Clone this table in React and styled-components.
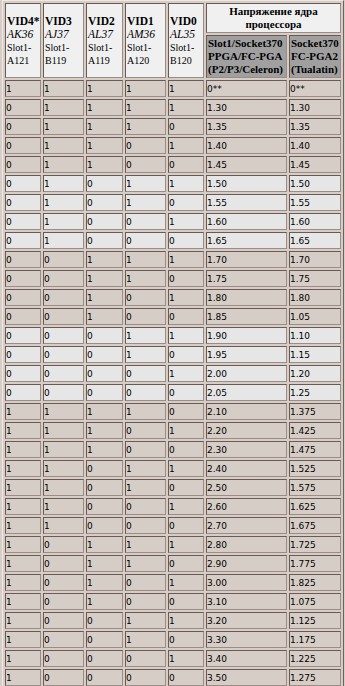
import React from 'react';
import styled, { createGlobalStyle } from 'styled-components';

const GlobalStyle = createGlobalStyle`
  html, body {
    margin: 0;
    padding: 0;
    background: #d6cec6;
  }
`;

const Table = styled.div`
  display: grid;
  grid-template-columns: 36px 41px 37px 41px 36px 81px 52px;
  grid-template-rows: 30px 43px;
  grid-auto-rows: 17px;
  gap: 2px;
  width: max-content;
  margin-left: 2px;
  padding: 2px;
  border: 1px solid;
  border-color: #efe9e5 #6f605c #6f605c #efe9e5;
  background: #d6cec6;
`;

const Box = styled.div`
  box-sizing: border-box;
  border: 1px solid;
  border-color: #6a5a56 #9c8c86 #9c8c86 #6a5a56;
  color: #000;
  white-space: nowrap;
  overflow: hidden;
`;

const VidHead = styled(Box)`
  grid-row: span 2;
  background: #f0f0f0;
  display: flex;
  flex-direction: column;
  justify-content: center;
  padding: 0 1px;
  font-family: "Liberation Serif", serif;
  font-size: 11px;
  line-height: 13px;
`;

const Pin = styled.b`
  font-size: 11.5px;
`;

const Socket = styled.i`
  font-size: 11.5px;
`;

const Slot = styled.span`
  font-size: 10px;
`;

const VoltHead = styled(Box)`
  grid-column: span 2;
  background: #f0f0f0;
  display: flex;
  align-items: center;
  justify-content: center;
  text-align: center;
  font: bold 11px/13px "Liberation Serif", serif;
`;

const SubHead = styled(Box)`
  background: #a0a0a0;
  display: flex;
  flex-direction: column;
  justify-content: center;
  padding: 0 1px;
  font: bold 11px/13.3px "Liberation Serif", serif;
`;

const Cell = styled(Box)`
  background: ${p => (p.$light ? '#e6e6e6' : '#d6cec6')};
  display: flex;
  align-items: center;
  padding: 0;
  font-family: "DejaVu Sans", sans-serif;
  font-size: 9px;
`;

const pins = [
  ['VID4*', 'AK36', 'Slot1-', 'A121'],
  ['VID3', 'AJ37', 'Slot1-', 'B119'],
  ['VID2', 'AL37', 'Slot1-', 'A119'],
  ['VID1', 'AM36', 'Slot1-', 'A120'],
  ['VID0', 'AL35', 'Slot1-', 'B120'],
];

const rows = [
  ['11111', '0**', '0**'],
  ['01111', '1.30', '1.30'],
  ['01110', '1.35', '1.35'],
  ['01101', '1.40', '1.40'],
  ['01100', '1.45', '1.45'],
  ['01011', '1.50', '1.50'],
  ['01010', '1.55', '1.55'],
  ['01001', '1.60', '1.60'],
  ['01000', '1.65', '1.65'],
  ['00111', '1.70', '1.70'],
  ['00110', '1.75', '1.75'],
  ['00101', '1.80', '1.80'],
  ['00100', '1.85', '1.05'],
  ['00011', '1.90', '1.10'],
  ['00010', '1.95', '1.15'],
  ['00001', '2.00', '1.20'],
  ['00000', '2.05', '1.25'],
  ['11110', '2.10', '1.375'],
  ['11101', '2.20', '1.425'],
  ['11100', '2.30', '1.475'],
  ['11011', '2.40', '1.525'],
  ['11010', '2.50', '1.575'],
  ['11001', '2.60', '1.625'],
  ['11000', '2.70', '1.675'],
  ['10111', '2.80', '1.725'],
  ['10110', '2.90', '1.775'],
  ['10101', '3.00', '1.825'],
  ['10100', '3.10', '1.075'],
  ['10011', '3.20', '1.125'],
  ['10010', '3.30', '1.175'],
  ['10001', '3.40', '1.225'],
  ['10000', '3.50', '1.275'],
];

// rows drawn on the lighter grey background
const lightRows = new Set([5, 6, 7, 8, 13, 14, 15, 16]);

export default function App() {
  return (
    <>
      <GlobalStyle />
      <Table>
        {pins.map(([pin, socket, slot, slotPin]) => (
          <VidHead key={pin}>
            <Pin>{pin}</Pin>
            <Socket>{socket}</Socket>
            <Slot>{slot}</Slot>
            <Slot>{slotPin}</Slot>
          </VidHead>
        ))}
        <VoltHead>Напряжение ядра<br />процессора</VoltHead>
        <SubHead>
          <span>Slot1/Socket370</span>
          <span>PPGA/FC-PGA</span>
          <span>(P2/P3/Celeron)</span>
        </SubHead>
        <SubHead>
          <span>Socket370</span>
          <span>FC-PGA2</span>
          <span>(Tualatin)</span>
        </SubHead>
        {rows.map(([bits, p3, tual], i) => (
          <React.Fragment key={i}>
            {bits.split('').map((b, j) => (
              <Cell key={j} $light={lightRows.has(i)}>{b}</Cell>
            ))}
            <Cell $light={lightRows.has(i)}>{p3}</Cell>
            <Cell $light={lightRows.has(i)}>{tual}</Cell>
          </React.Fragment>
        ))}
      </Table>
    </>
  );
}
